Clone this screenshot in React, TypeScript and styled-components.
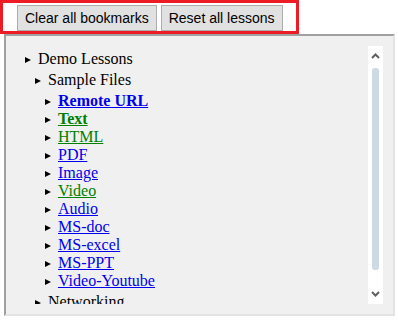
import React from "react";
import styled, { createGlobalStyle } from "styled-components";

const Global = createGlobalStyle`
  html, body { margin: 0; padding: 0; background: #ffffff; }
  body { font-family: "Liberation Serif", "Times New Roman", serif; }
`;

const Toolbar = styled.div`
  box-sizing: border-box;
  width: 299px;
  height: 34px;
  border: 3px solid #ed1c24;
  padding: 2px 0 0 14px;
  display: flex;
  align-items: flex-start;
  gap: 4px;
`;

const Button = styled.button`
  box-sizing: border-box;
  height: 26px;
  padding: 0 7px;
  margin: 0;
  background: #e1e1e1;
  border: 1px solid #adadad;
  border-radius: 0;
  font-family: "Liberation Sans", Arial, sans-serif;
  font-size: 14px;
  color: #000;
  line-height: 24px;
`;

const Panel = styled.div`
  box-sizing: border-box;
  margin-left: 4px;
  width: 391px;
  height: 282px;
  background: #f0f0f0;
  border-style: solid;
  border-width: 2px;
  border-color: #a0a0a0 #e3e3e3 #e3e3e3 #a0a0a0;
  padding: 10px;
  display: flex;
`;

const TreeArea = styled.div`
  flex: 1;
  overflow: hidden;
  padding: 4px 0 0 9px;
`;

const Scrollbar = styled.div`
  width: 15px;
  background: #ffffff;
  display: flex;
  flex-direction: column;
  align-items: center;
`;

const ArrowBox = styled.div`
  height: 20px;
  width: 15px;
  display: flex;
  align-items: center;
  justify-content: center;
`;

const Track = styled.div`
  flex: 1;
  width: 15px;
  display: flex;
  justify-content: center;
  padding-top: 2px;
`;

const Thumb = styled.div`
  width: 7px;
  height: 202px;
  border-radius: 3px;
  background: #cdd9e3;
`;

const Children = styled.div`
  margin: 3px 0;
`;

const Row = styled.div<{ $level: number }>`
  display: flex;
  align-items: flex-start;
  height: 18px;
  line-height: 18px;
  padding-left: ${(p) => (p.$level - 1) * 10}px;
  font-size: 16px;
  white-space: nowrap;
`;

const Arrow = styled.span`
  width: 0;
  height: 0;
  margin-top: 7px;
  margin-right: 7px;
  border-left: 6px solid #000;
  border-top: 3.5px solid transparent;
  border-bottom: 3.5px solid transparent;
  flex: none;
`;

const Label = styled.span`
  color: #000;
`;

const Link = styled.a<{ $color: string; $bold?: boolean }>`
  color: ${(p) => p.$color};
  font-weight: ${(p) => (p.$bold ? "bold" : "normal")};
  text-decoration: underline;
`;

const BLUE = "#0000ee";
const GREEN = "#008000";

const files: { name: string; color: string; bold?: boolean }[] = [
  { name: "Remote URL", color: BLUE, bold: true },
  { name: "Text", color: GREEN, bold: true },
  { name: "HTML", color: GREEN },
  { name: "PDF", color: BLUE },
  { name: "Image", color: BLUE },
  { name: "Video", color: GREEN },
  { name: "Audio", color: BLUE },
  { name: "MS-doc", color: BLUE },
  { name: "MS-excel", color: BLUE },
  { name: "MS-PPT", color: BLUE },
  { name: "Video-Youtube", color: BLUE },
];

const Chevron = ({ up }: { up?: boolean }) => (
  <svg width="9" height="6" viewBox="0 0 9 6">
    <polyline
      points={up ? "1,5 4.5,1.5 8,5" : "1,1 4.5,4.5 8,1"}
      fill="none"
      stroke="#606060"
      strokeWidth="2"
    />
  </svg>
);

export default function App() {
  return (
    <>
      <Global />
      <Toolbar>
        <Button>Clear all bookmarks</Button>
        <Button>Reset all lessons</Button>
      </Toolbar>
      <Panel>
        <TreeArea>
          <Row $level={1}>
            <Arrow />
            <Label>Demo Lessons</Label>
          </Row>
          <Children>
            <Row $level={2}>
              <Arrow />
              <Label>Sample Files</Label>
            </Row>
            <Children>
              {files.map((f) => (
                <Row $level={3} key={f.name}>
                  <Arrow />
                  <Link href="#" $color={f.color} $bold={f.bold}>
                    {f.name}
                  </Link>
                </Row>
              ))}
            </Children>
            <Row $level={2}>
              <Arrow />
              <Label>Networking</Label>
            </Row>
          </Children>
        </TreeArea>
        <Scrollbar>
          <ArrowBox>
            <Chevron up />
          </ArrowBox>
          <Track>
            <Thumb />
          </Track>
          <ArrowBox>
            <Chevron />
          </ArrowBox>
        </Scrollbar>
      </Panel>
    </>
  );
}
